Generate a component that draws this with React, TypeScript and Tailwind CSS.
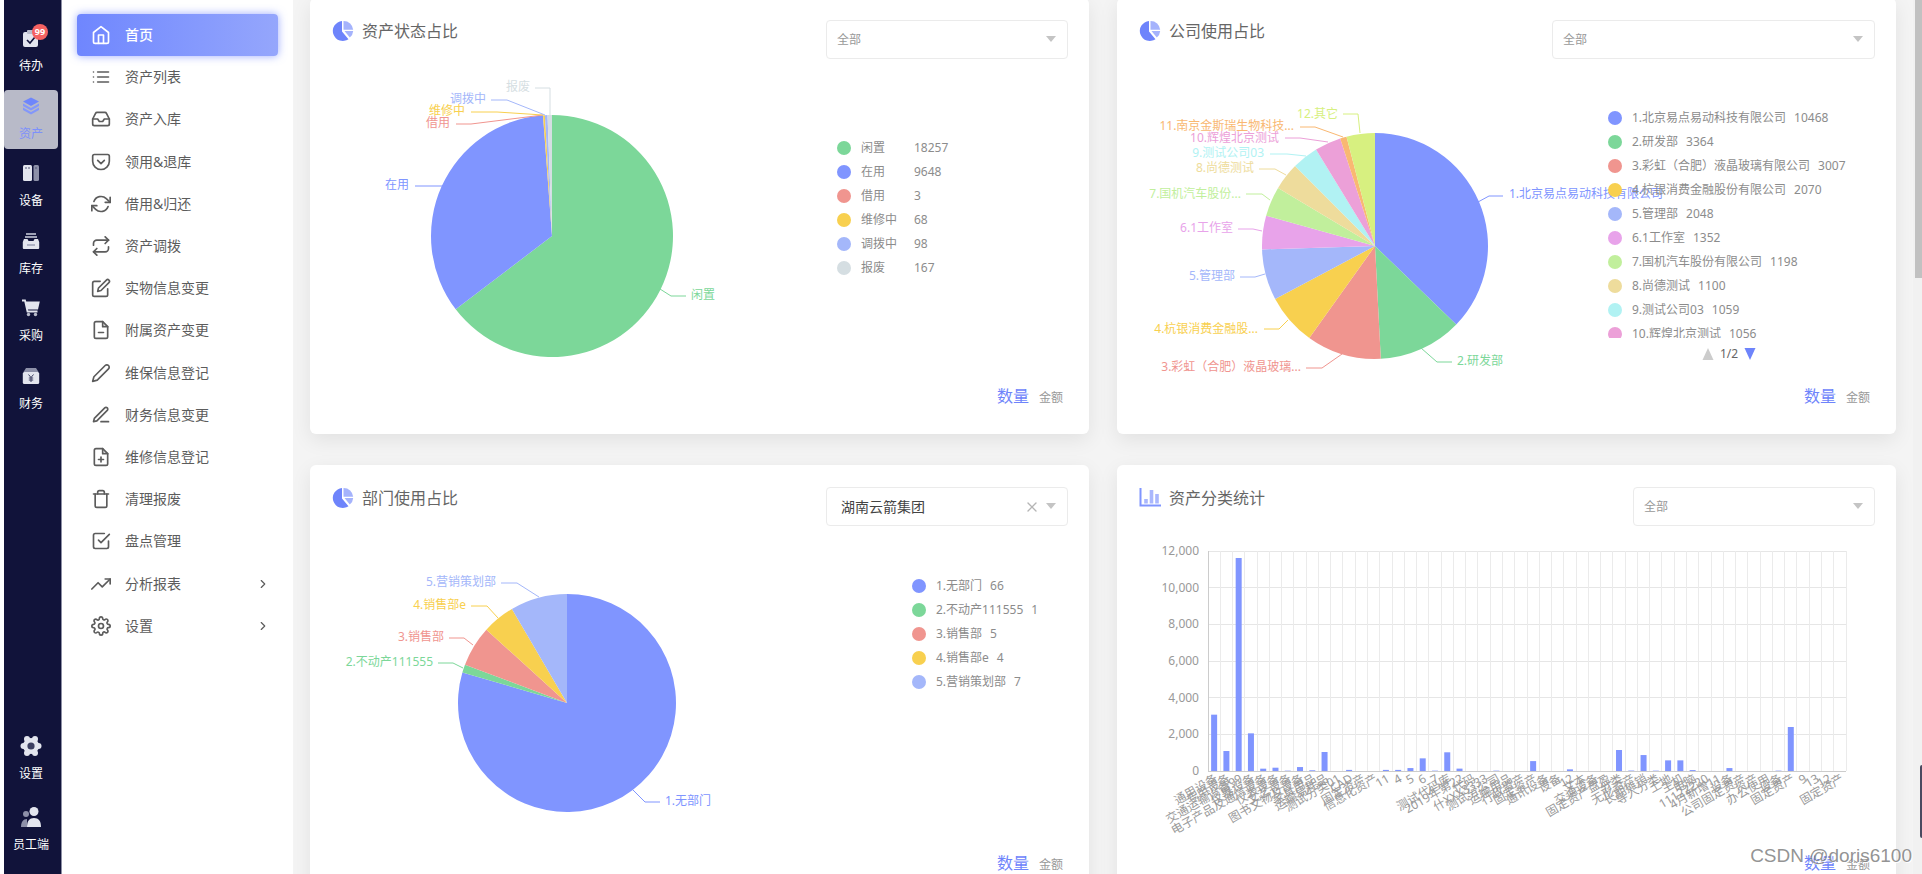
import { ReactNode } from "react";
import { IconType } from "react-icons";
import {
  FiCheckSquare,
  FiChevronRight,
  FiEdit,
  FiEdit2,
  FiEdit3,
  FiFileMinus,
  FiFilePlus,
  FiHome,
  FiInbox,
  FiList,
  FiPocket,
  FiRefreshCw,
  FiRepeat,
  FiSettings,
  FiTrash,
  FiTrendingUp,
  FiX,
} from "react-icons/fi";

interface RailItem {
  name: string;
  icon: ReactNode;
  active?: boolean;
  badge?: number;
}

interface MenuItem {
  name: string;
  icon: IconType;
  active?: boolean;
  expandable?: boolean;
}

interface Slice {
  name: string;
  value: number;
  color: string;
  // text shown beside the pie when it differs from the legend name
  label?: string;
  labelX: number;
  labelY: number;
  line: string;
}

const railItems: RailItem[] = [
  {
    name: "待办",
    badge: 99,
    icon: (
      <svg viewBox="0 0 20 20" className="size-5" aria-hidden="true">
        <rect x="2" y="4" width="15" height="15" rx="2" fill="#e3e5ee" />
        <rect x="6" y="2" width="7" height="4" rx="1" fill="#b9bccb" />
        <path d="M6 12l3 3 5-6" fill="none" stroke="#11133a" strokeWidth="1.6" />
      </svg>
    ),
  },
  {
    name: "资产",
    active: true,
    icon: (
      <svg viewBox="0 0 20 20" className="size-5" aria-hidden="true">
        <path d="M10 1.5l8 4-8 4.5-8-4.5z" fill="#6f86fb" />
        <path d="M2 7.5l8 4.5 8-4.5V10l-8 4.500L2 10z" fill="#8397fa" />
        <path d="M2 11.500l8 4.500 8-4.500V14l-8 4.500L2 14z" fill="#8397fa" />
      </svg>
    ),
  },
  {
    name: "设备",
    icon: (
      <svg viewBox="0 0 20 20" className="size-5" aria-hidden="true">
        <rect x="2" y="2" width="9" height="16" rx="1.5" fill="#e3e5ee" />
        <rect x="12.5" y="2" width="5.5" height="16" rx="1.5" fill="#8d90a8" />
        <path d="M4 5h2M7 5h2M14 5h2" stroke="#555878" strokeWidth="1.2" />
      </svg>
    ),
  },
  {
    name: "库存",
    icon: (
      <svg viewBox="0 0 20 20" className="size-5" aria-hidden="true">
        <path d="M5 3h10M4 6h12" stroke="#9fa2b6" strokeWidth="1.8" />
        <path
          d="M3 8h3.5l1 2h5l1-2H17l1.2 3v6a1 1 0 0 1-1 1H2.8a1 1 0 0 1-1-1v-6z"
          fill="#e3e5ee"
        />
        <path d="M6 14h8" stroke="#8d90a8" strokeWidth="1.2" />
      </svg>
    ),
  },
  {
    name: "采购",
    icon: (
      <svg viewBox="0 0 20 20" className="size-5" aria-hidden="true">
        <path d="M1 2.5h3l2.5 11h10" fill="none" stroke="#e3e5ee" strokeWidth="1.8" />
        <path d="M4.2 3.5h14.6l-1.8 8H6z" fill="#e3e5ee" />
        <circle cx="7.5" cy="16.5" r="1.7" fill="#b9bccb" />
        <circle cx="14.5" cy="16.5" r="1.7" fill="#b9bccb" />
      </svg>
    ),
  },
  {
    name: "财务",
    icon: (
      <svg viewBox="0 0 20 20" className="size-5" aria-hidden="true">
        <path d="M5 2h10l2.5 4h-15z" fill="#8d90a8" />
        <rect x="1.8" y="6" width="16.4" height="12" rx="1.5" fill="#e3e5ee" />
        <path
          d="M7.5 8.5l2.5 3 2.5-3M10 11.5V16M7.8 12h4.4M7.8 14h4.4"
          fill="none"
          stroke="#3c3f60"
        />
      </svg>
    ),
  },
];

const railBottom: RailItem[] = [
  {
    name: "设置",
    icon: (
      <svg viewBox="0 0 22 22" className="size-[22px]" aria-hidden="true">
        <g fill="#e3e5ee">
          <circle cx="11" cy="11" r="8" />
          <circle cx="7" cy="4" r="3" />
          <circle cx="15" cy="4" r="3" />
          <circle cx="18.5" cy="11" r="3" />
          <circle cx="15" cy="18" r="3" />
          <circle cx="7" cy="18" r="3" />
          <circle cx="3.5" cy="11" r="3" />
        </g>
        <circle cx="11" cy="11" r="3.6" fill="#3c3f60" />
      </svg>
    ),
  },
  {
    name: "员工端",
    icon: (
      <svg viewBox="0 0 22 22" className="size-[22px]" aria-hidden="true">
        <circle cx="6" cy="8" r="3" fill="#8d90a8" />
        <path d="M1 21c0-5 2-8 6-8v8z" fill="#8d90a8" />
        <circle cx="14" cy="5.5" r="4.5" fill="#e3e5ee" />
        <path d="M7 21c0-6 2.5-9 7-9s7 3 7 9z" fill="#e3e5ee" />
      </svg>
    ),
  },
];

const menuItems: MenuItem[] = [
  { name: "首页", icon: FiHome, active: true },
  { name: "资产列表", icon: FiList },
  { name: "资产入库", icon: FiInbox },
  { name: "领用&退库", icon: FiPocket },
  { name: "借用&归还", icon: FiRefreshCw },
  { name: "资产调拨", icon: FiRepeat },
  { name: "实物信息变更", icon: FiEdit },
  { name: "附属资产变更", icon: FiFileMinus },
  { name: "维保信息登记", icon: FiEdit2 },
  { name: "财务信息变更", icon: FiEdit3 },
  { name: "维修信息登记", icon: FiFilePlus },
  { name: "清理报废", icon: FiTrash },
  { name: "盘点管理", icon: FiCheckSquare },
  { name: "分析报表", icon: FiTrendingUp, expandable: true },
  { name: "设置", icon: FiSettings, expandable: true },
];

const statusSlices: Slice[] = [
  { name: "闲置", value: 18257, color: "#7cd799", labelX: 381, labelY: 236, line: "350,230 361,237 376,237" },
  { name: "在用", value: 9648, color: "#8095ff", labelX: 99, labelY: 126, line: "105,127 133,127" },
  { name: "借用", value: 3, color: "#f0958f", labelX: 140, labelY: 64, line: "146,65 161,65 233,56" },
  { name: "维修中", value: 68, color: "#f8d04f", labelX: 155, labelY: 52, line: "161,53 187,53 233,56" },
  { name: "调拨中", value: 98, color: "#a4b7fa", labelX: 176, labelY: 40, line: "181,41 197,41 235,56" },
  { name: "报废", value: 167, color: "#d5dee2", labelX: 220, labelY: 28, line: "225,29 240,29 240,56" },
];

const companySlices: Slice[] = [
  { name: "1.北京易点易动科技有限公司", value: 10468, color: "#8095ff", labelX: 392, labelY: 135, line: "361,143 372,137 386,137" },
  { name: "2.研发部", value: 3364, color: "#7cd799", labelX: 340, labelY: 302, line: "304,289 320,303 335,303" },
  { name: "3.彩虹（合肥）液晶玻璃有限公司", label: "3.彩虹（合肥）液晶玻璃...", value: 3007, color: "#f0958f", labelX: 184, labelY: 308, line: "189,309 205,309 225,295" },
  { name: "4.杭银消费金融股份有限公司", label: "4.杭银消费金融股...", value: 2070, color: "#f8d04f", labelX: 141, labelY: 270, line: "147,270 162,270 171,261" },
  { name: "5.管理部", value: 2048, color: "#a4b7fa", labelX: 118, labelY: 217, line: "123,218 138,218 148,215" },
  { name: "6.1工作室", value: 1352, color: "#e8a3ea", labelX: 116, labelY: 169, line: "121,170 136,170 145,172" },
  { name: "7.国机汽车股份有限公司", label: "7.国机汽车股份...", value: 1198, color: "#c1ef9c", labelX: 124, labelY: 135, line: "129,135 145,135 153,141" },
  { name: "8.尚德测试", value: 1100, color: "#eedc9c", labelX: 137, labelY: 109, line: "142,110 158,110 169,116" },
  { name: "9.测试公司03", value: 1059, color: "#b1f2f3", labelX: 147, labelY: 94, line: "153,95 170,95 189,97" },
  { name: "10.辉煌北京测试", value: 1056, color: "#eca0d8", labelX: 162, labelY: 79, line: "168,79 183,79 211,83" },
  { name: "11.南京金斯瑞生物科技有限公司", label: "11.南京金斯瑞生物科技...", value: 260, color: "#f9b872", labelX: 177, labelY: 67, line: "183,68 198,68 226,78" },
  { name: "12.其它", value: 1141, color: "#d7f080", labelX: 221, labelY: 55, line: "226,55 241,55 243,74" },
];

const departmentSlices: Slice[] = [
  { name: "1.无部门", value: 66, color: "#8095ff", labelX: 355, labelY: 275, line: "323,264 335,276 350,276" },
  { name: "2.不动产111555", value: 1, color: "#7cd799", labelX: 123, labelY: 136, line: "128,137 143,137 153,142" },
  { name: "3.销售部", value: 5, color: "#f0958f", labelX: 134, labelY: 111, line: "139,112 154,112 163,119" },
  { name: "4.销售部e", value: 4, color: "#f8d04f", labelX: 156, labelY: 79, line: "161,80 177,80 188,92" },
  { name: "5.营销策划部", value: 7, color: "#a4b7fa", labelX: 186, labelY: 56, line: "191,57 207,57 229,71" },
];

const categories: [string, number][] = [
  ["通用设备", 3073],
  ["专用设备", 1090],
  ["交通运输设备99", 11618],
  ["仪器设备", 2054],
  ["电子产品及通信设备", 127],
  ["仪表设备", 180],
  ["文艺设备", 20],
  ["图书文物及设备", 215],
  ["家具用品", 40],
  ["运输易耗品", 1036],
  ["测试分类01", 0],
  ["CAD", 60],
  ["固定资产", 0],
  ["信息化资产", 0],
  ["11", 60],
  ["4", 60],
  ["5", 160],
  ["6", 690],
  ["7", 20],
  ["测试代码库", 1020],
  ["2019年第22", 130],
  ["代码", 0],
  ["什XXX3333", 0],
  ["测试分公司", 20],
  ["运输用品", 0],
  ["行政资产", 0],
  ["固定资产", 540],
  ["通讯设备", 0],
  ["设备", 0],
  ["12", 90],
  ["文本", 0],
  ["交通设备", 0],
  ["固定资产盘盈", 0],
  ["分类", 1145],
  ["无形资产", 25],
  ["长期摊销", 870],
  ["导入分类", 20],
  ["土地", 580],
  ["主机", 580],
  ["电脑", 50],
  ["11122220", 0],
  ["4月新增11", 0],
  ["设备", 160],
  ["公司固定资产", 0],
  ["资产", 0],
  ["办公使用", 0],
  ["设备", 20],
  ["固定资产", 2400],
  ["9", 0],
  ["13", 0],
  ["12", 0],
  ["固定资产", 0],
];

function RailLink({ item }: { item: RailItem }) {
  return (
    <li>
      <a
        href="#"
        className={`relative flex h-[59px] w-[54px] flex-col items-center rounded pt-1.5 text-xs ${
          item.active ? "bg-[#b8bac8] text-[#7d91fb]" : "text-white"
        }`}
      >
        <span className="flex h-5 items-center">{item.icon}</span>
        <span className="mt-2.5 leading-4">{item.name}</span>
        {item.badge && (
          <span className="absolute top-0.5 left-7 flex size-4 items-center justify-center rounded-full bg-[#f56262] text-[9px] font-bold text-white">
            {item.badge}
          </span>
        )}
      </a>
    </li>
  );
}

function PieIcon() {
  return (
    <svg viewBox="0 0 22 22" className="size-[22px]" aria-hidden="true">
      <path d="M10 1A10 10 0 1 0 16.5 19.2L10 11.5z" fill="#6e84fb" />
      <path d="M11.5 1A9.500 9.500 0 0 1 21.200 9.800h-9.700z" fill="#a5b3fc" />
      <path d="M12.500 11H21.200a9.500 9.500 0 0 1-3.400 6.600z" fill="#a5b3fc" />
    </svg>
  );
}

function BarIcon() {
  return (
    <svg viewBox="0 0 22 22" className="size-[22px]" aria-hidden="true">
      <path d="M1.5 1v17.500H22" fill="none" stroke="#8095ff" strokeWidth="2" />
      <path d="M7 12v4.500M12.500 3v13.500M18 7v9.500" stroke="#aab7fd" strokeWidth="3.6" />
    </svg>
  );
}

interface CardProps {
  id: string;
  title: string;
  icon: ReactNode;
  selectClass: string;
  selected?: string;
  children: ReactNode;
}

function Card({ id, title, icon, selectClass, selected, children }: CardProps) {
  return (
    <section className="flex h-[436px] flex-col rounded-md bg-white shadow-[0_6px_20px_rgba(0,0,0,0.08)]">
      <header className="flex h-[61px] items-start justify-between pt-[22px] pr-[21px] pl-[22px]">
        <div className="flex items-center gap-2">
          {icon}
          <label htmlFor={id} className="text-base leading-[22px] text-[#666]">
            {title}
          </label>
        </div>
        <div className={`relative ${selectClass}`}>
          <select
            id={id}
            className={`h-[39px] w-full appearance-none rounded border border-[#ebebeb] bg-white ${
              selected ? "pl-3.5 text-sm text-[#444]" : "pl-2.5 text-xs text-[#999]"
            }`}
          >
            <option>{selected ?? "全部"}</option>
          </select>
          {selected && (
            <button
              type="button"
              aria-label="清除"
              className="absolute top-3 right-7 text-[#b5b5b5]"
            >
              <FiX className="size-4" />
            </button>
          )}
          <svg
            viewBox="0 0 10 6"
            className="pointer-events-none absolute top-4 right-3 h-1.5 w-2.5"
            aria-hidden="true"
          >
            <path d="M0 0h10L5 6z" fill="#c4c4c4" />
          </svg>
        </div>
      </header>
      <div className="flex min-h-0 flex-1">{children}</div>
      <footer className="flex h-[50px] items-baseline justify-end gap-2.5 pr-[26px]">
        <button type="button" className="text-base text-[#6e84fb]">
          数量
        </button>
        <button type="button" className="text-xs text-[#999]">
          金额
        </button>
      </footer>
    </section>
  );
}

interface PieChartProps {
  slices: Slice[];
  cx: number;
  cy: number;
  r: number;
  className: string;
}

function PieChart({ slices, cx, cy, r, className }: PieChartProps) {
  const total = slices.reduce((sum, s) => sum + s.value, 0);
  let angle = 0;

  const paths = slices.map((s) => {
    const start = angle;
    angle += (s.value / total) * Math.PI * 2;
    const x1 = cx + r * Math.sin(start);
    const y1 = cy - r * Math.cos(start);
    const x2 = cx + r * Math.sin(angle);
    const y2 = cy - r * Math.cos(angle);
    const large = angle - start > Math.PI ? 1 : 0;
    return `M${cx} ${cy}L${x1} ${y1}A${r} ${r} 0 ${large} 1 ${x2} ${y2}Z`;
  });

  return (
    <svg className={`h-[325px] shrink-0 overflow-visible ${className}`} role="img">
      {slices.map((s, i) => (
        <g key={s.name}>
          <path d={paths[i]} fill={s.color} />
          <polyline points={s.line} fill="none" stroke={s.color} />
          <text
            x={s.labelX}
            y={s.labelY + 4}
            textAnchor={s.labelX > cx ? "start" : "end"}
            fill={s.color}
            fontSize="12"
          >
            {s.label ?? s.name}
          </text>
        </g>
      ))}
    </svg>
  );
}

interface LegendProps {
  slices: Slice[];
  columns?: boolean;
}

function Legend({ slices, columns }: LegendProps) {
  return (
    <ul>
      {slices.map((s) => (
        <li key={s.name} className="flex h-6 items-center text-xs whitespace-nowrap text-[#8c8c8c]">
          <span
            className="mr-2.5 size-3.5 rounded-full"
            style={{ backgroundColor: s.color }}
          />
          <span className={columns ? "w-[53px]" : "mr-2"}>{s.name}</span>
          <span>{s.value}</span>
        </li>
      ))}
    </ul>
  );
}

function CategoryChart() {
  const left = 91;
  const right = 729;
  const top = 25;
  const bottom = 245;
  const max = 12000;
  const step = (right - left) / categories.length;
  const ticks = [0, 2000, 4000, 6000, 8000, 10000, 12000];

  return (
    <svg viewBox="0 0 779 325" className="h-[325px] w-full" role="img">
      {ticks.map((tick) => {
        const y = bottom - (tick / max) * (bottom - top);
        return (
          <g key={tick}>
            <line
              x1={left}
              x2={right}
              y1={y}
              y2={y}
              stroke="#e6e6e6"
              shapeRendering="crispEdges"
            />
            <text x={left - 9} y={y + 4} textAnchor="end" fontSize="12" fill="#999">
              {tick.toLocaleString("en-US")}
            </text>
          </g>
        );
      })}
      {categories.map((_, i) => (
        <line
          key={i}
          x1={left + step * (i + 1)}
          x2={left + step * (i + 1)}
          y1={top}
          y2={bottom}
          stroke="#ebebeb"
          shapeRendering="crispEdges"
        />
      ))}
      <path
        d={`M${left} ${top}V${bottom}H${right}`}
        fill="none"
        stroke="#ccc"
        shapeRendering="crispEdges"
      />
      {categories.map(([name, value], i) => {
        const x = left + step * (i + 0.5);
        const height = (value / max) * (bottom - top);
        return (
          <g key={i}>
            <rect x={x - 3} y={bottom - height} width="6" height={height} fill="#8095ff" />
            <text
              x={x + 3}
              y={bottom + 12}
              textAnchor="end"
              fontSize="12"
              fill="#999"
              transform={`rotate(-30 ${x} ${bottom + 8})`}
            >
              {name}
            </text>
          </g>
        );
      })}
    </svg>
  );
}

export default function App() {
  return (
    <div className="relative flex h-screen overflow-hidden bg-white pl-1 font-['Noto_Sans','Noto_Sans_CJK_SC',sans-serif]">
      <nav className="flex w-[58px] shrink-0 flex-col justify-between border-r border-[#8d8fa5] bg-[#11133a] pt-[22px] pb-3.5">
        <ul className="flex h-[397px] flex-col justify-between">
          {railItems.map((item) => (
            <RailLink key={item.name} item={item} />
          ))}
        </ul>
        <ul className="flex flex-col gap-3">
          {railBottom.map((item) => (
            <RailLink key={item.name} item={item} />
          ))}
        </ul>
      </nav>

      <aside className="w-[231px] shrink-0 px-[15px] pt-3.5">
        <ul className="flex h-[633px] flex-col justify-between">
          {menuItems.map((item) => (
            <li key={item.name}>
              <a
                href="#"
                className={`flex h-[42px] items-center rounded pr-2 pl-3.5 text-sm ${
                  item.active
                    ? "bg-linear-to-r from-[#6f86fe] to-[#95a6fc] font-medium text-white shadow-[0_0_8px_rgba(112,134,254,0.7)]"
                    : "text-[#5c5c5c]"
                }`}
              >
                <item.icon className="mr-3.5 size-5" />
                <span className="flex-1">{item.name}</span>
                {item.expandable && <FiChevronRight className="size-3.5" />}
              </a>
            </li>
          ))}
        </ul>
      </aside>

      <main className="min-w-0 flex-1 overflow-hidden bg-[#f4f4f4] px-[17px]">
        <div className="-mt-0.5 grid grid-cols-2 gap-x-7 gap-y-[31px]">
          <Card id="status" title="资产状态占比" icon={<PieIcon />} selectClass="w-[242px]">
            <PieChart slices={statusSlices} cx={242} cy={177} r={121} className="w-[527px]" />
            <div className="pt-[77px]">
              <Legend slices={statusSlices} columns />
            </div>
          </Card>

          <Card id="company" title="公司使用占比" icon={<PieIcon />} selectClass="w-[323px]">
            <PieChart slices={companySlices} cx={258} cy={187} r={113} className="w-[491px]" />
            <div className="z-10 pt-[47px]">
              <div className="h-[232px] overflow-hidden">
                <Legend slices={companySlices} />
              </div>
              <div className="flex items-center gap-1.5 pt-2 pl-[94px] text-xs leading-4 text-[#666]">
                <button type="button" aria-label="上一页">
                  <svg viewBox="0 0 12 12" className="size-3">
                    <path d="M6 0l5.5 12H0.5z" fill="#ccc" />
                  </svg>
                </button>
                1/2
                <button type="button" aria-label="下一页">
                  <svg viewBox="0 0 12 12" className="size-3">
                    <path d="M6 12L11.5 0H0.5z" fill="#6e84fb" />
                  </svg>
                </button>
              </div>
            </div>
          </Card>

          <Card
            id="department"
            title="部门使用占比"
            icon={<PieIcon />}
            selectClass="w-[242px]"
            selected="湖南云箭集团"
          >
            <PieChart slices={departmentSlices} cx={257} cy={177} r={109} className="w-[602px]" />
            <div className="pt-12">
              <Legend slices={departmentSlices} />
            </div>
          </Card>

          <Card id="category" title="资产分类统计" icon={<BarIcon />} selectClass="w-[242px]">
            <CategoryChart />
          </Card>
        </div>
      </main>

      <div className="flex w-[9px] shrink-0 justify-end bg-[#f1f1f1]">
        <div className="h-[278px] w-[7px] bg-[#c1c1c1]" />
      </div>

      <div className="absolute top-[765px] right-0 h-[73px] w-0.5 rounded-l bg-[#4a4a60]" />
      <p className="absolute right-2.5 bottom-1 font-['Liberation_Sans',sans-serif] text-[19px] text-[#777]/80 text-shadow-[1px_1px_0_#fff]">
        CSDN @doris6100
      </p>
    </div>
  );
}
